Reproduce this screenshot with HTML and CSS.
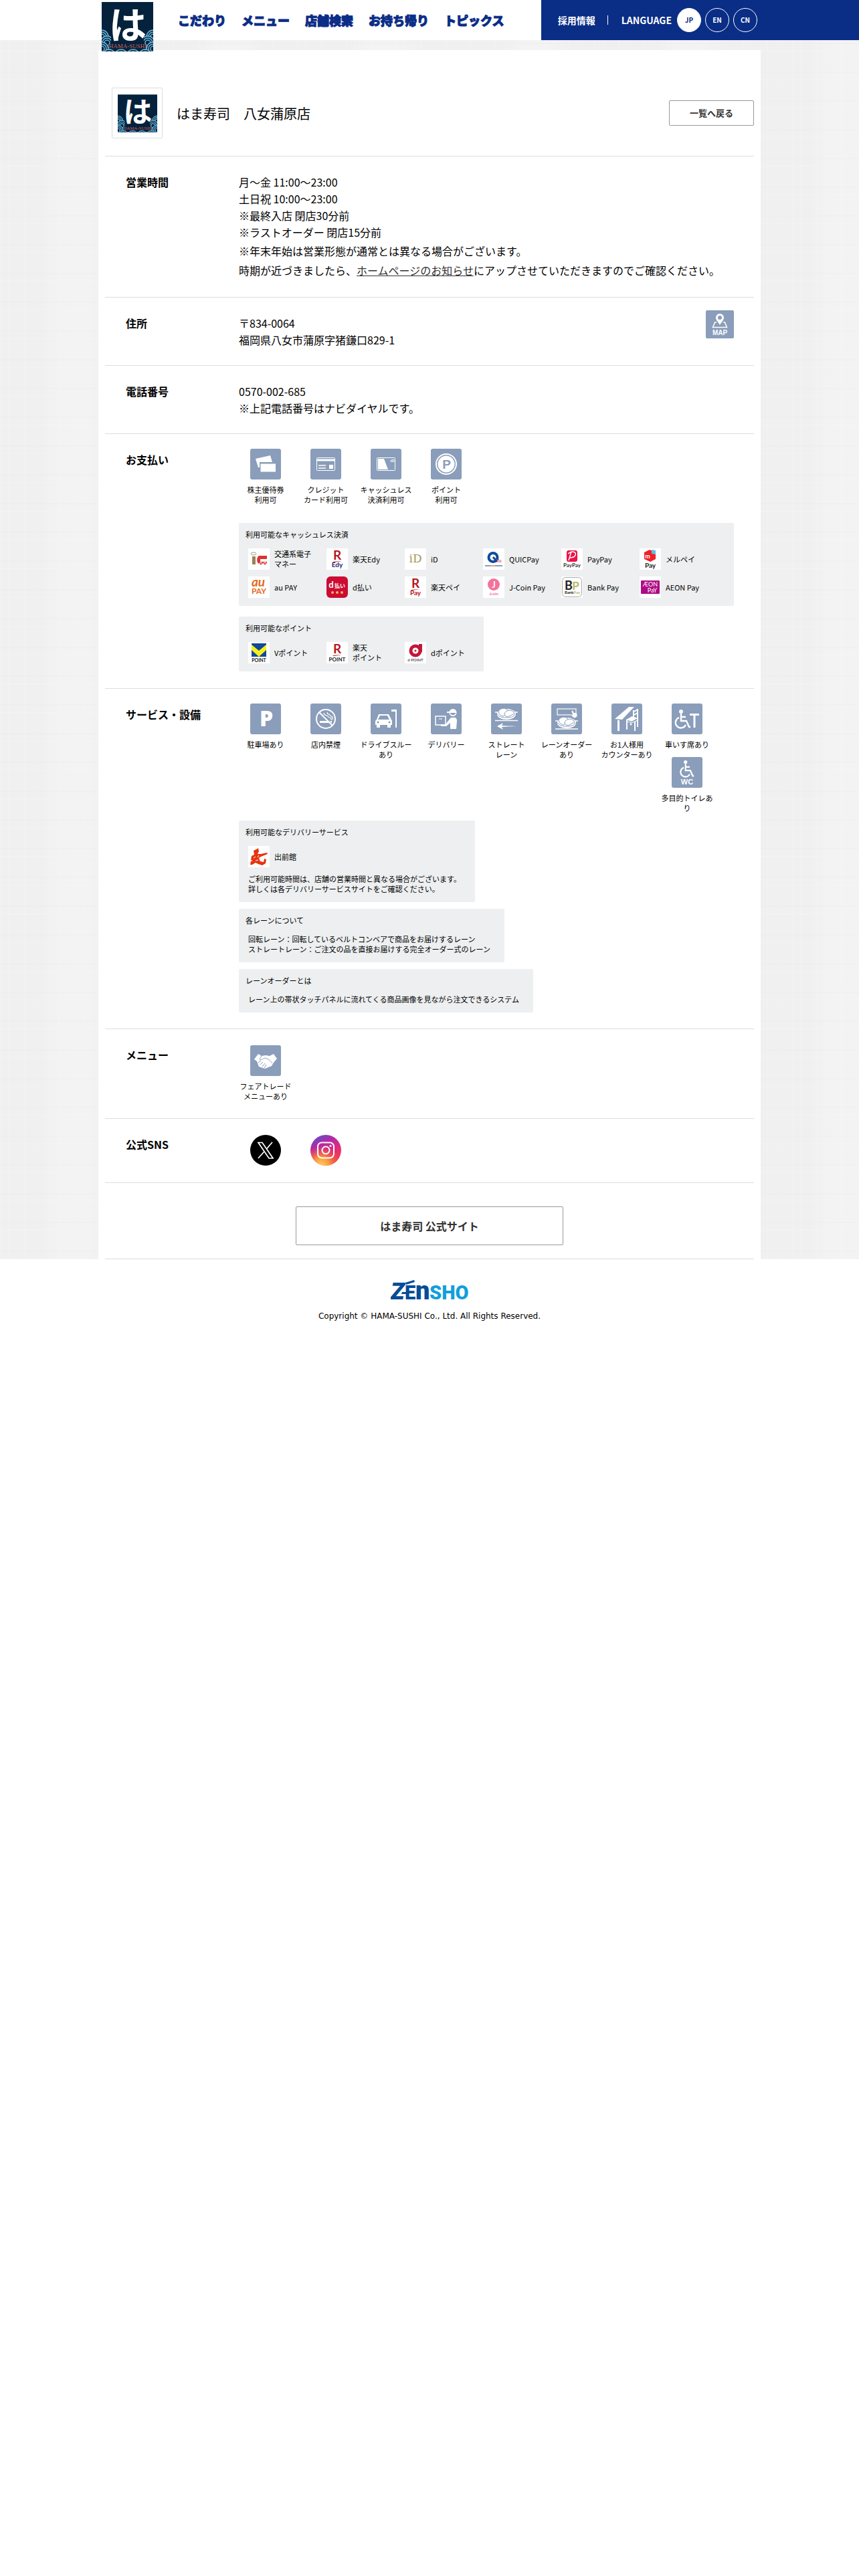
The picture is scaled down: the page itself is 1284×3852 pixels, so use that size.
FILE: index.html
```html
<!DOCTYPE html>
<html lang="ja">
<head>
    <meta charset="UTF-8">
    <meta name="viewport" content="width=device-width, initial-scale=1">
    <title>はま寿司　八女蒲原店</title>
    <link rel="stylesheet" href="styles.css">
</head>
<body>
    <!-- shared shapes -->
    <svg class="defs" width="0" height="0" aria-hidden="true">
        <symbol id="hama" viewBox="0 0 77 74">
            <rect width="77" height="74" fill="#05223c"/>
            <g fill="#05223c" stroke="#6cb8de" stroke-width="1.5">
                <g id="wave"><circle cx="0" cy="52" r="10"/><circle cx="0" cy="52" r="7"/><circle cx="0" cy="52" r="4"/></g>
                <use href="#wave" x="77"/>
                <use href="#wave" x="8" y="9"/>
                <use href="#wave" x="69" y="9"/>
                <use href="#wave" y="18"/>
                <use href="#wave" x="77" y="18"/>
                <use href="#wave" x="11" y="29"/>
                <use href="#wave" x="29" y="29"/>
                <use href="#wave" x="47" y="29"/>
                <use href="#wave" x="65" y="29"/>
            </g>
            <path d="M14 50h49v13h3v7H11v-7h3z" fill="#05223c"/>
        </symbol>
        <symbol id="sushi" viewBox="0 0 46 20">
            <path d="M6 7h34" stroke="#fff" stroke-width="1.5"/>
            <ellipse cx="23" cy="10" rx="14" ry="8" fill="#fff"/>
            <path d="M10 10c2 4 6 5 13 5s11-1 13-5" fill="none" stroke="#8a9dba" stroke-width="1"/>
            <path d="M11 6c2-5 9-6 13-3l3 5-9 5c-4-1-6-3-7-7z" fill="#fff" stroke="#8a9dba" stroke-width="1"/>
            <path d="M20 9c2-5 9-6 13-3l2 3-10 5c-3-1-5-2-5-5z" fill="#fff" stroke="#8a9dba" stroke-width="1"/>
        </symbol>
        <symbol id="wheelchair" viewBox="0 0 24 30">
            <circle cx="10" cy="4" r="3" fill="#fff"/>
            <path d="M10 7v11h8l4 9h2M10 12h7M7 13a8 8 0 1 0 10 11" fill="none" stroke="#fff" stroke-width="2.4"/>
        </symbol>
    </svg>

    <header class="header">
        <div class="header-inner">
            <a href="#" class="logo" aria-label="はま寿司">
                <svg width="77" height="74" viewBox="0 0 77 74"><use href="#hama"/><text x="39" y="55" text-anchor="middle" font-size="56" fill="#fff" class="t-jp">は</text><text x="39" y="69" text-anchor="middle" font-size="9" fill="#d0625a" class="t-serif">HAMA-SUSHI</text></svg>
            </a>
            <nav class="nav">
                <a href="#">こだわり</a>
                <a href="#">メニュー</a>
                <a href="#">店舗検索</a>
                <a href="#">お持ち帰り</a>
                <a href="#">トピックス</a>
            </nav>
            <div class="sub-nav">
                <a href="#" class="recruit">採用情報</a>
                <span class="language">LANGUAGE</span>
                <a href="#" class="lang current">JP</a>
                <a href="#" class="lang">EN</a>
                <a href="#" class="lang">CN</a>
            </div>
        </div>
    </header>

    <main class="main">
        <div class="panel">
            <div class="shop-head">
                <div class="shop-logo">
                    <svg width="59" height="57" viewBox="0 0 77 74"><use href="#hama"/><text x="39" y="55" text-anchor="middle" font-size="56" fill="#fff" class="t-jp">は</text><text x="39" y="69" text-anchor="middle" font-size="9" fill="#d0625a" class="t-serif">HAMA-SUSHI</text></svg>
                </div>
                <h1>はま寿司　八女蒲原店</h1>
                <a href="#" class="back">一覧へ戻る</a>
            </div>

            <dl class="info">
                <div class="row">
                    <dt>営業時間</dt>
                    <dd>
                        月～金 11:00～23:00<br>
                        土日祝 10:00～23:00<br>
                        ※最終入店 閉店30分前<br>
                        ※ラストオーダー 閉店15分前
                        <p class="notice">※年末年始は営業形態が通常とは異なる場合がございます。<br>
                        時期が近づきましたら、<a href="#">ホームページのお知らせ</a>にアップさせていただきますのでご確認ください。</p>
                    </dd>
                </div>

                <div class="row">
                    <dt>住所</dt>
                    <dd class="address">
                        <div>〒834-0064<br>福岡県八女市蒲原字猪鎌口829-1</div>
                        <a href="#" class="map" aria-label="MAP">
                            <svg width="42" height="42" viewBox="0 0 42 42">
                                <path d="M21 5a6 6 0 0 0-6 6c0 4 4 7 6 11 2-4 6-7 6-11a6 6 0 0 0-6-6zm0 3a3 3 0 1 1 0 6 3 3 0 0 1 0-6z" fill="#fff" fill-rule="evenodd"/>
                                <path d="M16 18h-2.500l-3 7.500h21l-3-7.500H26" fill="none" stroke="#fff" stroke-width="1.500"/>
                                <text x="21" y="37" text-anchor="middle" font-size="10" class="t-bold">MAP</text>
                            </svg>
                        </a>
                    </dd>
                </div>

                <div class="row">
                    <dt>電話番号</dt>
                    <dd>0570-002-685<br>※上記電話番号はナビダイヤルです。</dd>
                </div>

                <div class="row">
                    <dt>お支払い</dt>
                    <dd class="icons">
                        <ul class="icon-list">
                            <li><svg class="icon" viewBox="0 0 46 46"><path d="M8 15l22-5 3 10H14v8h-2z" fill="#fff"/><path d="M15.500 22.500H38v12H15.500z" fill="#fff"/></svg>株主優待券<br>利用可</li>
                            <li><svg class="icon" viewBox="0 0 46 46"><rect x="9.500" y="13.500" width="27" height="19" rx="1" fill="none" stroke="#fff"/><path d="M10 15.500h26v3H10zM28 24h6v6h-6z" fill="#fff"/><path d="M12 25h11M12 29h11" stroke="#fff" stroke-width="1.500"/></svg>クレジット<br>カード利用可</li>
                            <li><svg class="icon" viewBox="0 0 46 46"><rect x="9.500" y="13.500" width="27" height="19" rx="1" fill="none" stroke="#fff"/><path d="M11 15h9l6 16H11z" fill="#fff"/><text x="29.500" y="20" font-size="6" class="t-bold">iD</text></svg>キャッシュレス<br>決済利用可</li>
                            <li><svg class="icon" viewBox="0 0 46 46"><circle cx="23" cy="23" r="15" fill="none" stroke="#fff" stroke-width="2"/><circle cx="23" cy="23" r="12.500" fill="#fff"/><text x="23.500" y="30" text-anchor="middle" font-size="19" class="t-bold t-slate">P</text></svg>ポイント<br>利用可</li>
                        </ul>
                        <div class="box">
                            <p class="box-title">利用可能なキャッシュレス決済</p>
                            <ul class="brands">
                                <li><svg viewBox="0 0 32 32"><rect width="32" height="32" fill="#fff"/><ellipse cx="8" cy="8" rx="4" ry="2" fill="none" stroke="#999"/><path d="M6 12h5v12H6z" fill="#9c8156"/><path d="M28 11H17c-5 0-5 12 0 12h11v-3H18v-4h10z" fill="#de3131"/><circle cx="19" cy="23" r="2" fill="#de3131" stroke="#fff"/><circle cx="25" cy="23" r="2" fill="#de3131" stroke="#fff"/></svg><span>交通系電子<br>マネー</span></li>
                                <li><svg viewBox="0 0 32 32"><rect width="32" height="32" fill="#fff"/><text x="16" y="17" text-anchor="middle" font-size="19" fill="#b5161e" class="t-brand">R</text><path d="M9 20l14-1-12 2z" fill="#b5161e"/><text x="16" y="28" text-anchor="middle" font-size="10" fill="#261f6d" class="t-brand">Edy</text></svg><span>楽天Edy</span></li>
                                <li><svg viewBox="0 0 32 32"><rect width="32" height="32" fill="#fff"/><text x="16" y="21" text-anchor="middle" font-size="17" fill="#a8935a" class="t-wide">iD</text></svg><span>iD</span></li>
                                <li><svg viewBox="0 0 32 32"><rect width="32" height="32" fill="#fff"/><circle cx="15" cy="13.500" r="6.500" fill="none" stroke="#0d4a9c" stroke-width="4"/><path d="M15 13l6 7" stroke="#0d4a9c" stroke-width="3"/><path d="M20 16l3 5M23 16l2 5M26 17l1 4" stroke="#d8505a"/><path d="M3 26h8M18 26h11" stroke="#5b7fb5" stroke-width="1.500"/><path d="M11 26h7" stroke="#e08350" stroke-width="1.500"/></svg><span>QUICPay</span></li>
                                <li><svg viewBox="0 0 32 32"><rect width="32" height="32" fill="#fff"/><rect x="8" y="3" width="16" height="17" rx="3" fill="#ee1248"/><path d="M11 18l4-13M10 8c6-5 13-3 11 2-1 3-5 4-9 4" fill="none" stroke="#fff" stroke-width="1.500"/><text x="16" y="28" text-anchor="middle" font-size="8" fill="#333" class="t-brand">PayPay</text></svg><span>PayPay</span></li>
                                <li><svg viewBox="0 0 32 32"><rect width="32" height="32" fill="#fff"/><path d="M15 2l9 4v10l-8 4-9-4V6z" fill="#ef2128"/><path d="M18 2l6 1v6l-6-1z" fill="#61bde8"/><text x="12" y="15" text-anchor="middle" font-size="9" fill="#fff" class="t-brand">m</text><text x="16" y="29" text-anchor="middle" font-size="10" fill="#222" class="t-brand">Pay</text></svg><span>メルペイ</span></li>
                                <li><svg viewBox="0 0 32 32"><rect width="32" height="32" fill="#fff"/><text x="15" y="15" text-anchor="middle" font-size="19" fill="#e26b1d" class="t-brand t-italic">au</text><text x="16" y="26" text-anchor="middle" font-size="12" fill="#e26b1d" class="t-brand">PAY</text></svg><span>au PAY</span></li>
                                <li><svg viewBox="0 0 32 32"><rect width="32" height="32" rx="6" fill="#cc0c33"/><text x="7" y="17" text-anchor="middle" font-size="13" fill="#fff" class="t-brand">d</text><text x="20" y="17" text-anchor="middle" font-size="8" fill="#fff" class="t-jp">払い</text><g fill="#f6b35c"><circle cx="9" cy="24" r="2"/><circle cx="16" cy="24" r="2"/><circle cx="23" cy="24" r="2"/></g></svg><span>d払い</span></li>
                                <li><svg viewBox="0 0 32 32"><rect width="32" height="32" fill="#fff"/><text x="16" y="17" text-anchor="middle" font-size="19" fill="#b5161e" class="t-brand">R</text><path d="M9 20l14-1-12 2z" fill="#b5161e"/><text x="16" y="28" text-anchor="middle" font-size="10" fill="#b5161e" class="t-brand">Pay</text></svg><span>楽天ペイ</span></li>
                                <li><svg viewBox="0 0 32 32"><rect width="32" height="32" fill="#fff"/><circle cx="16" cy="12" r="9" fill="#f4729b"/><text x="16" y="17" text-anchor="middle" font-size="13" fill="#fff" class="t-brand">J</text><text x="16" y="28" text-anchor="middle" font-size="6" fill="#f4729b" class="t-brand">Jcoin</text></svg><span>J-Coin Pay</span></li>
                                <li><svg viewBox="0 0 32 32"><rect width="32" height="32" fill="#fff"/><rect x="1.500" y="1.500" width="29" height="29" rx="5" fill="#fff" stroke="#aaa"/><text x="11" y="20" text-anchor="middle" font-size="18" fill="#222" class="t-brand">B</text><text x="21.500" y="20" text-anchor="middle" font-size="17" fill="#b9b865" class="t-brand">P</text><text x="5" y="26" font-size="6" fill="#222" class="t-brand">Bank<tspan fill="#b9b865">Pay</tspan></text></svg><span>Bank Pay</span></li>
                                <li><svg viewBox="0 0 32 32"><rect width="32" height="32" fill="#fff"/><rect x="2" y="6" width="28" height="20" rx="1" fill="#ae0b86"/><text x="16" y="15" text-anchor="middle" font-size="9" fill="#fff" class="t-thin">ÆON</text><text x="19" y="24" text-anchor="middle" font-size="9" fill="#fff" class="t-thin">PaY</text></svg><span>AEON Pay</span></li>
                            </ul>
                        </div>
                        <div class="box fit">
                            <p class="box-title">利用可能なポイント</p>
                            <ul class="brands">
                                <li><svg viewBox="0 0 32 32"><rect width="32" height="32" fill="#fff"/><path d="M5 2h22v20H5z" fill="#11499b"/><path d="M5 4l11 9L27 4v8L16 22 5 12z" fill="#f7ee1d"/><text x="16" y="30" text-anchor="middle" font-size="7" fill="#222" class="t-brand">POINT</text></svg><span>Vポイント</span></li>
                                <li><svg viewBox="0 0 32 32"><rect width="32" height="32" fill="#fff"/><text x="16" y="17" text-anchor="middle" font-size="19" fill="#b5161e" class="t-brand">R</text><path d="M9 20l14-1-12 2z" fill="#b5161e"/><text x="16" y="29" text-anchor="middle" font-size="8" fill="#222" class="t-brand">POINT</text></svg><span>楽天<br>ポイント</span></li>
                                <li><svg viewBox="0 0 32 32"><rect width="32" height="32" fill="#fff"/><circle cx="16" cy="13" r="7" fill="none" stroke="#c2173a" stroke-width="5"/><path d="M21 3h5v12h-5z" fill="#c2173a"/><circle cx="16" cy="13" r="1.500" fill="#c2173a"/><text x="16" y="29" text-anchor="middle" font-size="6" fill="#555" class="t-brand">d POINT</text></svg><span>dポイント</span></li>
                            </ul>
                        </div>
                    </dd>
                </div>

                <div class="row">
                    <dt>サービス・設備</dt>
                    <dd class="icons service">
                        <ul class="icon-list">
                            <li><svg class="icon" viewBox="0 0 46 46"><text x="24" y="34" text-anchor="middle" font-size="32" class="t-heavy">P</text></svg>駐車場あり</li>
                            <li><svg class="icon" viewBox="0 0 46 46"><circle cx="23" cy="23" r="14" fill="none" stroke="#fff" stroke-width="2"/><path d="M13 13l20 20" stroke="#fff" stroke-width="2"/><path d="M14 26h11l3 3H14zM29 26h3v3h-1z" fill="#fff"/><path d="M20 14c0 4 3 3 5 4s1 3 4 3 2 3 2 4M25 13c0 3 2 3 4 4s1 3 4 3v4" fill="none" stroke="#fff" stroke-width="1.200"/></svg>店内禁煙</li>
                            <li><svg class="icon" viewBox="0 0 46 46"><path d="M12 16h15l4 8 1 2v6h-2v4h-5v-4H14v4H9v-4H7v-6l2-2zm2 2l-3 6h17l-3-6z" fill="#fff" fill-rule="evenodd"/><circle cx="11" cy="28" r="1.500" fill="#8a9dba"/><circle cx="28" cy="28" r="1.500" fill="#8a9dba"/><path d="M31 9h8v27h-2V12h-6z" fill="#fff"/></svg>ドライブスルーあり</li>
                            <li><svg class="icon" viewBox="0 0 46 46"><rect x="7" y="19" width="15" height="13" fill="none" stroke="#fff" stroke-width="1.500"/><path d="M12 23h5" stroke="#fff"/><circle cx="33" cy="13.500" r="5.500" fill="#fff"/><path d="M24 12h13v2H24z" fill="#fff"/><path d="M29 15c2 3 6 3 8 0v-1h-8z" fill="#8a9dba"/><path d="M30 21h5c3 0 4 2 4 5l-1 12h-9V29l-6 5h-8v-3h7z" fill="#fff"/></svg>デリバリー</li>
                            <li><svg class="icon" viewBox="0 0 46 46"><use href="#sushi" y="6" width="46" height="20"/><path d="M6 25.500h34" stroke="#fff" stroke-width="1.500"/><path d="M9 34l9-5-2 4 22 1-22 1 2 4z" fill="#fff"/></svg>ストレート<br>レーン</li>
                            <li><svg class="icon" viewBox="0 0 46 46"><rect x="9" y="8" width="28" height="9" fill="none" stroke="#fff" stroke-width="1.200"/><path d="M30 11l2-1 2 4 4-1 1 6-4 3-6-4 3-1z" fill="#fff" stroke="#8a9dba" stroke-width=".5"/><use href="#sushi" y="19" width="46" height="20"/><path d="M6 38h34" stroke="#fff" stroke-width="1.500"/></svg>レーンオーダーあり</li>
                            <li><svg class="icon" viewBox="0 0 46 46"><path d="M5 23L26 5h8L16 24zM9 25h3v16H9z" fill="#fff"/><path d="M22 24l9-5 8 3-9 5z" fill="#fff"/><path d="M23 24v15M35 27v14M39 8v27M33 10v11M34 12l5-3M34 17l5-3" fill="none" stroke="#fff" stroke-width="2"/><path d="M24 27l6 2 9-4" fill="none" stroke="#fff"/><circle cx="29" cy="31" r="1.500" fill="#fff"/></svg>お1人様用<br>カウンターあり</li>
                            <li><svg class="icon" viewBox="0 0 46 46"><use href="#wheelchair" x="4" y="8" width="24" height="30"/><path d="M27 15h14v3h-5.500v18h-3V18H27z" fill="#fff"/></svg>車いす席あり</li>
                            <li><svg class="icon" viewBox="0 0 46 46"><use href="#wheelchair" x="11" y="4" width="23" height="27"/><text x="23" y="41" text-anchor="middle" font-size="11" class="t-bold">WC</text></svg>多目的トイレあり</li>
                        </ul>
                        <div class="box fit">
                            <p class="box-title">利用可能なデリバリーサービス</p>
                            <ul class="brands">
                                <li><svg viewBox="0 0 32 32"><rect width="32" height="32" fill="#fff"/><path d="M8 7l6-3 1-1 1 5-2 4h5l9-2 1 2-10 4-3 2 2 5 5 1 1-5 3 1-1 6-5 3-6-2-4-2-5 3H3l1-5 3-1-3-1 1-6 4-2z" fill="#e7340f"/><path d="M8 18l3-2M11 22l4-1M14 17l2-3" stroke="#fff"/></svg><span>出前館</span></li>
                            </ul>
                            <p class="note">ご利用可能時間は、店舗の営業時間と異なる場合がございます。<br>詳しくは各デリバリーサービスサイトをご確認ください。</p>
                        </div>
                        <div class="box fit">
                            <p class="box-title">各レーンについて</p>
                            <p class="note">回転レーン：回転しているベルトコンベアで商品をお届けするレーン<br>ストレートレーン：ご注文の品を直接お届けする完全オーダー式のレーン</p>
                        </div>
                        <div class="box fit">
                            <p class="box-title">レーンオーダーとは</p>
                            <p class="note">レーン上の帯状タッチパネルに流れてくる商品画像を見ながら注文できるシステム</p>
                        </div>
                    </dd>
                </div>

                <div class="row">
                    <dt>メニュー</dt>
                    <dd class="icons short">
                        <ul class="icon-list">
                            <li><svg class="icon" viewBox="0 0 46 46"><path d="M6 21l6-8 5 3 6-1 6 1 6-3 5 7-5 6-3 5-10 4-9-3-3-8z" fill="#fff"/><path d="M17 16l-3 5c2 2 5 0 7-2 6 1 9 4 12 8M12 26l4-3M15 29l4-4M18 32l4-5M21 34l3-5" fill="none" stroke="#8a9dba" stroke-width="1"/></svg>フェアトレード<br>メニューあり</li>
                        </ul>
                    </dd>
                </div>

                <div class="row">
                    <dt>公式SNS</dt>
                    <dd class="icons short">
                        <ul class="icon-list">
                            <li><a href="#" aria-label="X"><svg class="sns" viewBox="0 0 46 46"><circle cx="23" cy="23" r="23" fill="#000"/><path d="M12 11.500h6L34 35h-6zM33 11L24.500 21M20.500 25.500L12 35" fill="none" stroke="#fff" stroke-width="1.700"/></svg></a></li>
                            <li><a href="#" aria-label="Instagram"><svg class="sns" viewBox="0 0 46 46">
                                <defs>
                                    <linearGradient id="ig1" x1=".2" y1="0" x2=".7" y2="1"><stop offset="0" stop-color="#5a50cf"/><stop offset=".3" stop-color="#b429a4"/><stop offset=".65" stop-color="#e52c75"/><stop offset="1" stop-color="#ee4b4b"/></linearGradient>
                                    <radialGradient id="ig2" cx=".35" cy="1" r=".65"><stop offset="0" stop-color="#ffd060"/><stop offset=".4" stop-color="#fb9b3c"/><stop offset="1" stop-color="#f0503c" stop-opacity="0"/></radialGradient>
                                </defs>
                                <circle cx="23" cy="23" r="23" fill="url(#ig1)"/><circle cx="23" cy="23" r="23" fill="url(#ig2)"/>
                                <rect x="11" y="11.500" width="24" height="23" rx="6" fill="none" stroke="#fff" stroke-width="2"/><circle cx="23" cy="23" r="5.500" fill="none" stroke="#fff" stroke-width="2"/><circle cx="30" cy="16.500" r="1.500" fill="#fff"/></svg></a></li>
                        </ul>
                    </dd>
                </div>
            </dl>

            <div class="official">
                <a href="#">はま寿司 公式サイト</a>
            </div>
        </div>
    </main>

    <footer class="footer">
        <svg class="zensho" width="116" height="32" viewBox="0 0 116 32" role="img" aria-label="ZENSHO">
            <g fill="#074c97" class="t-logo">
                <text x="0" y="30" font-size="35" class="t-italic">Z</text>
                <text x="21" y="30" font-size="29">E</text>
                <text x="37" y="30" font-size="38">n</text>
            </g>
            <path d="M22 5l13-4 1 3-13 4zM17 19h6v3h-7z" fill="#074c97"/>
            <text x="58" y="30" font-size="29" fill="#129fdc" class="t-logo">SHO</text>
        </svg>
        <p>Copyright © HAMA-SUSHI Co., Ltd. All Rights Reserved.</p>
    </footer>
</body>
</html>
```
FILE: styles.css
```css
*{
    margin: 0;
    padding: 0;
    box-sizing: border-box;
}
body{
    font-family: "Noto Sans CJK JP", sans-serif;
    font-size: 16px;
    line-height: 25px;
    color: #000;
    background: #fff;
}
ul{
    list-style: none;
}
a{
    color: #333;
    text-decoration: none;
}
.defs{
    position: absolute;
}

/* header */
.header{
    height: 60px;
    background: linear-gradient(to right, #fff 63%, #0a2d86 63%);
}
.header-inner{
    display: flex;
    align-items: center;
    max-width: 980px;
    height: 60px;
    margin: 0 auto;
}
.logo{
    align-self: flex-start;
    margin-top: 3px;
    margin-right: 37px;
    height: 74px;
    z-index: 1;
}
.logo svg{
    display: block;
}
.nav{
    display: flex;
    gap: 23px;
    font-size: 18px;
    font-weight: 900;
}
.nav a{
    color: #0a2d86;
    -webkit-text-stroke: 1px #0a2d86;
}
.sub-nav{
    display: flex;
    flex: 1;
    align-items: center;
    justify-content: flex-end;
    gap: 6px;
    height: 60px;
    color: #fff;
    font-size: 14px;
    font-weight: bold;
}
.sub-nav a{
    color: #fff;
}
.recruit{
    line-height: 14px;
    padding-right: 18px;
    margin-right: 14px;
    border-right: 1px solid #fff;
}
.language{
    margin-right: 2px;
}
.lang{
    width: 36px;
    height: 36px;
    border: 1px solid #fff;
    border-radius: 50%;
    font-size: 10px;
    line-height: 34px;
    text-align: center;
}
.sub-nav .current{
    background: #fff;
    color: #0a2d86;
}

/* main */
.main{
    padding-top: 15px;
    background-color: #f0f0f0;
    background-image:
        repeating-linear-gradient(90deg, rgba(255,255,255,.2) 0 1px, transparent 1px 13px, rgba(255,255,255,.15) 13px 14px, transparent 14px 37px),
        repeating-linear-gradient(0deg, rgba(255,255,255,.2) 0 1px, transparent 1px 11px, rgba(230,230,230,.2) 11px 13px, transparent 13px 43px),
        repeating-linear-gradient(90deg, transparent 0 60px, rgba(255,255,255,.2) 90px 130px, transparent 170px 230px);
}
.panel{
    max-width: 990px;
    margin: 0 auto;
    padding: 0 10px;
    background: #fff;
}
.shop-head{
    display: flex;
    align-items: center;
    padding: 56px 0 26px 10px;
}
.shop-logo{
    display: flex;
    align-items: center;
    justify-content: center;
    width: 76px;
    height: 76px;
    border: 1px solid #ddd;
    border-radius: 2px;
    margin-right: 21px;
}
h1{
    flex: 1;
    font-size: 20px;
    font-weight: normal;
}
.back{
    width: 127px;
    border: 1px solid #999;
    border-radius: 2px;
    font-size: 13px;
    font-weight: bold;
    line-height: 36px;
    text-align: center;
}

/* shop info */
.row{
    display: flex;
    border-top: 1px solid #ddd;
}
dt{
    width: 200px;
    padding: 26px 0 25px 31px;
    font-weight: bold;
}
dd{
    flex: 1;
    padding: 26px 30px 25px 0;
}
.notice{
    margin-top: 1px;
    line-height: 29px;
}
.notice a{
    text-decoration: underline;
}
.address{
    display: flex;
    justify-content: space-between;
    padding-top: 19px;
}
.address div{
    padding-top: 7px;
}
.map{
    height: 42px;
}
.map svg{
    display: block;
    background: #8a9dba;
    border-radius: 2px;
}
.icons{
    padding-top: 22px;
    font-size: 11px;
    line-height: 15px;
}
.icon-list{
    display: flow-root;
}
.icon-list li{
    float: left;
    width: 80px;
    margin: 0 10px 11px 0;
    text-align: center;
}
.icon, .sns{
    display: block;
    width: 46px;
    height: 46px;
    margin: 0 auto 8px;
}
.icon{
    background: #8a9dba;
    border-radius: 3px;
}
.service{
    padding-bottom: 24px;
}
.short{
    padding-top: 24px;
}
.short li{
    margin-bottom: 0;
}
.sns{
    margin-bottom: 0;
}
.box{
    margin-top: 16px;
    padding: 10px 8px 12px 10px;
    background: #edeff0;
    border-radius: 2px;
}
.fit{
    width: fit-content;
}
.service .box{
    margin-top: 10px;
}
.service .icon-list + .box{
    margin-top: 0;
}
.box-title{
    margin-bottom: 13px;
}
.brands{
    display: flex;
    flex-wrap: wrap;
    gap: 10px 7px;
    padding-left: 4px;
}
.brands li{
    display: flex;
    align-items: center;
    gap: 7px;
    width: 110px;
}
.brands svg{
    flex: none;
    width: 32px;
    height: 32px;
}
.note{
    padding: 0 13px 0 4px;
}
.brands + .note{
    margin-top: 10px;
}
.official{
    padding: 35px 0 20px;
    border-top: 1px solid #ddd;
    border-bottom: 1px solid #ddd;
}
.official a{
    display: block;
    max-width: 400px;
    margin: 0 auto;
    border: 1px solid #999;
    border-radius: 2px;
    font-weight: bold;
    line-height: 56px;
    text-align: center;
}

/* footer */
.footer{
    padding: 30px 0;
    font-family: "DejaVu Sans", sans-serif;
    font-size: 12px;
    text-align: center;
}
.zensho{
    display: block;
    margin: 0 auto 11px;
}

/* lettering inside icons */
.t-jp{
    font-family: "Noto Sans CJK JP", sans-serif;
    font-weight: bold;
}
.t-serif{
    font-family: "Liberation Serif", serif;
}
.t-wide{
    font-family: "DejaVu Serif", serif;
}
.t-bold{
    font-family: "Liberation Sans", sans-serif;
    font-weight: bold;
    fill: #fff;
}
.t-heavy{
    font-family: "Open Sans", sans-serif;
    font-weight: 800;
    fill: #fff;
}
.t-slate{
    fill: #8a9dba;
}
.t-thin{
    font-family: Lato, sans-serif;
}
.t-brand{
    font-family: Lato, sans-serif;
    font-weight: bold;
}
.t-logo{
    font-family: Roboto, sans-serif;
    font-weight: 900;
}
.t-italic{
    font-style: italic;
}
```
